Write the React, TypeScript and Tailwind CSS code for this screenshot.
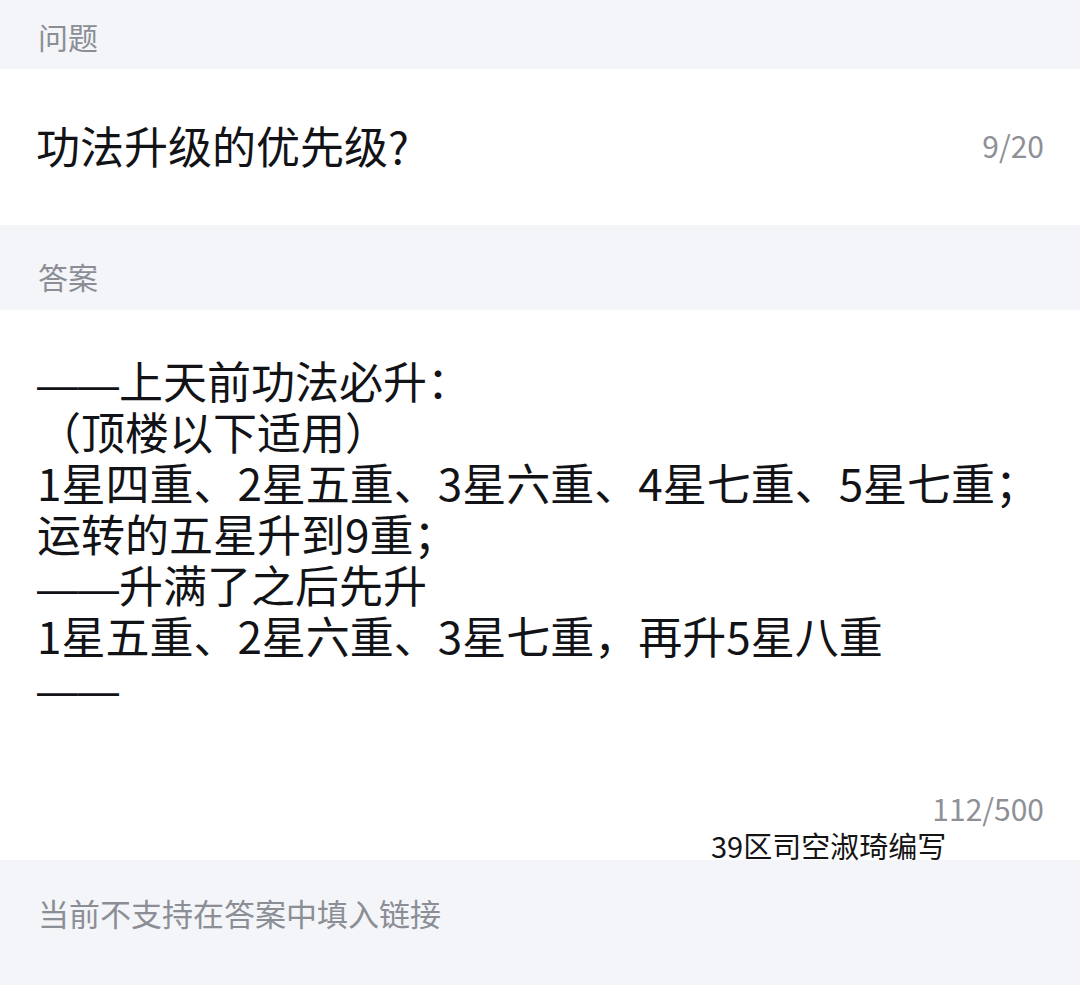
import React from "react";

const Dash = () => (
  <span className="text-[41px]" style={{ fontFamily: '"Liberation Sans", sans-serif' }}>
    ——
  </span>
);

export default function App() {
  const answerLines: React.ReactNode[] = [
    <>
      <Dash />
      上天前功法必升：
    </>,
    "（顶楼以下适用）",
    "1星四重、2星五重、3星六重、4星七重、5星七重；",
    "运转的五星升到9重；",
    <>
      <Dash />
      升满了之后先升
    </>,
    "1星五重、2星六重、3星七重，再升5星八重",
    <Dash />,
  ];

  return (
    <div
      className="min-h-[985px] w-[1080px] bg-[#f4f5f9] overflow-hidden"
      style={{ fontFamily: '"Noto Sans CJK SC", "Noto Sans", sans-serif' }}
    >
      {/* Question label */}
      <div className="h-[69px] px-[38px] pt-[2px] flex items-center text-[30px] leading-[36px] text-[#8b8e95]">
        问题
      </div>

      {/* Question input */}
      <div className="h-[156px] bg-white px-[36px] pb-[5px] flex items-center justify-between">
        <span className="text-[44px] leading-[52px] text-[#121317]">
          功法升级的优先级?
        </span>
        <span className="text-[30px] leading-[36px] text-[#8e9096]">9/20</span>
      </div>

      {/* Answer label */}
      <div className="h-[85px] px-[38px] pt-[17px] flex items-center text-[30px] leading-[36px] text-[#8b8e95]">
        答案
      </div>

      {/* Answer input */}
      <div className="h-[550px] bg-white flex flex-col">
        <div className="px-[37px] pt-[45px] text-[44px] leading-[51px] text-[#121317]">
          {answerLines.map((line, i) => (
            <div key={i} className="whitespace-nowrap h-[51px]">
              {line}
            </div>
          ))}
        </div>
        <div className="mt-auto flex justify-end pr-[36px] text-[30px] leading-[36px] text-[#8e9096]">
          112/500
        </div>
        {/* watermark */}
        <div className="pl-[711px] pt-[4px] text-[29px] leading-[30px] text-[#141414] whitespace-nowrap">
          39区司空淑琦编写
        </div>
      </div>

      {/* Notice */}
      <div className="px-[38px] pt-[33px] text-[31px] leading-[40px] text-[#8b8e95]">
        当前不支持在答案中填入链接
      </div>
    </div>
  );
}
